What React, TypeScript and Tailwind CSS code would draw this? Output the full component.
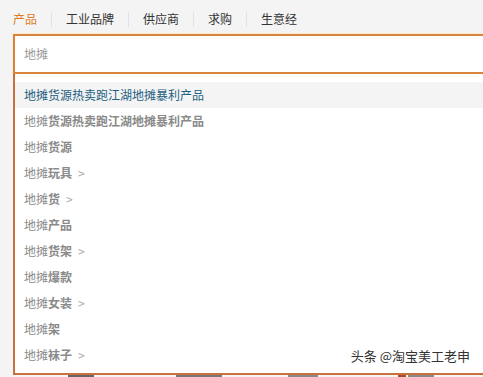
import React from "react";

const font = { fontFamily: '"Noto Sans CJK SC", "Noto Sans", sans-serif' };

type Item = { rest: string; arrow?: boolean };

const items: Item[] = [
  { rest: "货源热卖跑江湖地摊暴利产品" },
  { rest: "货源" },
  { rest: "玩具", arrow: true },
  { rest: "货", arrow: true },
  { rest: "产品" },
  { rest: "货架", arrow: true },
  { rest: "爆款" },
  { rest: "女装", arrow: true },
  { rest: "架" },
  { rest: "袜子", arrow: true },
];

const tabs = ["产品", "工业品牌", "供应商", "求购", "生意经"];

export default function App() {
  return (
    <div
      className="relative w-[483px] h-[377px] overflow-hidden bg-[#f4f4f4]"
      style={font}
    >
      {/* tabs */}
      <div className="flex items-center gap-[14px] pl-[13px] pt-[11px] text-[12px] leading-[16px] text-[#333]">
        {tabs.map((t, i) => (
          <React.Fragment key={t}>
            {i > 0 && <div className="w-px h-[15px] bg-[#e2e2e2]" />}
            <span className={i === 0 ? "text-[#e07b1f]" : ""}>{t}</span>
          </React.Fragment>
        ))}
      </div>

      {/* search box */}
      <div className="mt-[7px] ml-[13px] w-[520px] h-[40px] border-2 border-[#d8843c] bg-white shadow-[0_0_0_1px_#fdebd0] flex items-center pl-[9px] text-[12px] text-[#999]">
        地摊
      </div>

      {/* dropdown */}
      <div className="ml-[13px] w-[520px] border-l-2 border-b-2 border-[#c8713c] bg-white pt-[8px] pb-[5px] text-[12px]">
        <div className="h-[26px] flex items-center pl-[9px] bg-[#f4f4f4] text-[#1f5f80]">
          地摊货源热卖跑江湖地摊暴利产品
        </div>
        {items.map((it, i) => (
          <div
            key={i}
            className="h-[26px] flex items-center pl-[9px] text-[#8a8a8a]"
          >
            <span>地摊</span>
            <span className="font-bold">{it.rest}</span>
            {it.arrow && <span className="ml-[6px] text-[#aaa]">&gt;</span>}
          </div>
        ))}
      </div>

      {/* fragments of the page below */}
      <div className="flex h-[2px] pl-[68px]">
        <div className="w-[26px] bg-[#666]" />
        <div className="w-[46px] ml-[82px] bg-[#777]" />
        <div className="w-[30px] ml-[66px] bg-[#888]" />
        <div className="w-[8px] ml-[80px] bg-[#a0522d]" />
        <div className="w-[26px] ml-[2px] bg-[#888]" />
      </div>

      {/* watermark */}
      <div className="absolute right-[13px] top-[347px] text-[13px] leading-[18px] text-[#333] [text-shadow:0_0_2px_#fff]">
        头条 @淘宝美工老申
      </div>
    </div>
  );
}
